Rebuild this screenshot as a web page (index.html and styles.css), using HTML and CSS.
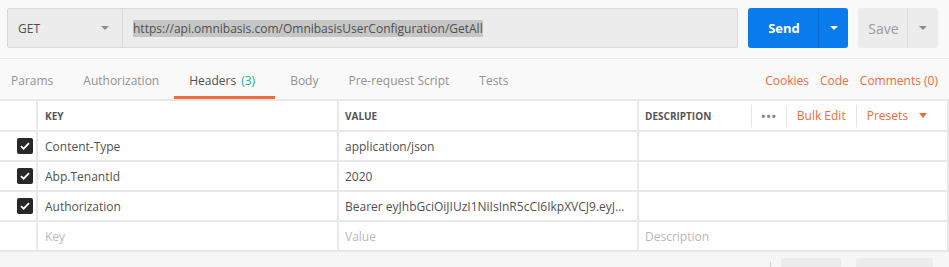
FILE: index.html
```html
<!DOCTYPE html>
<html>
<head>
<meta charset="utf-8">
<link rel="stylesheet" href="styles.css">
</head>
<body>
<div class="app">
  <div class="topbar">
    <div class="request">
      <div class="method">
        <span>GET</span>
        <svg class="caret" width="8" height="4" viewBox="0 0 8 4"><path d="M0 0h8L4 4z" fill="#8c8c8c"/></svg>
      </div>
      <div class="url"><span class="sel">https://api.omnibasis.com/OmnibasisUserConfiguration/GetAll</span></div>
    </div>
    <div class="btn send">
      <span class="label">Send</span>
      <span class="drop"><svg width="8" height="4" viewBox="0 0 8 4"><path d="M0 0h8L4 4z" fill="#fff"/></svg></span>
    </div>
    <div class="btn save">
      <span class="label">Save</span>
      <span class="drop"><svg width="8" height="4" viewBox="0 0 8 4"><path d="M0 0h8L4 4z" fill="#8c8c8c"/></svg></span>
    </div>
  </div>

  <div class="tabs">
    <div class="tab first">Params</div>
    <div class="tab">Authorization</div>
    <div class="tab active">Headers <span class="count">(3)</span></div>
    <div class="tab">Body</div>
    <div class="tab">Pre-request Script</div>
    <div class="tab">Tests</div>
    <div class="links">
      <span>Cookies</span>
      <span>Code</span>
      <span>Comments (0)</span>
    </div>
  </div>

  <div class="table">
    <div class="cell head"></div>
    <div class="cell head th key">KEY</div>
    <div class="cell head th">VALUE</div>
    <div class="cell head th desc-head">
      <span>DESCRIPTION</span>
      <div class="actions">
        <span class="sep"></span>
        <span class="dots">•••</span>
        <span class="sep"></span>
        <span class="act">Bulk Edit</span>
        <span class="sep"></span>
        <span class="act">Presets</span>
        <svg class="pcaret" width="8" height="5" viewBox="0 0 8 5"><path d="M0 0h8L4 5z" fill="#f26b3a"/></svg>
      </div>
    </div>

    <div class="cell check"><span class="box"><svg width="10" height="8" viewBox="0 0 10 8"><path d="M1 4.2l2.6 2.5L9 1.2" fill="none" stroke="#fff" stroke-width="1.8"/></svg></span></div>
    <div class="cell key">Content-Type</div>
    <div class="cell">application/json</div>
    <div class="cell"></div>

    <div class="cell check"><span class="box"><svg width="10" height="8" viewBox="0 0 10 8"><path d="M1 4.2l2.6 2.5L9 1.2" fill="none" stroke="#fff" stroke-width="1.8"/></svg></span></div>
    <div class="cell key">Abp.TenantId</div>
    <div class="cell">2020</div>
    <div class="cell"></div>

    <div class="cell check"><span class="box"><svg width="10" height="8" viewBox="0 0 10 8"><path d="M1 4.2l2.6 2.5L9 1.2" fill="none" stroke="#fff" stroke-width="1.8"/></svg></span></div>
    <div class="cell key">Authorization</div>
    <div class="cell">Bearer eyJhbGciOiJIUzI1NiIsInR5cCI6IkpXVCJ9.eyJ...</div>
    <div class="cell"></div>

    <div class="cell check"></div>
    <div class="cell key ph">Key</div>
    <div class="cell ph">Value</div>
    <div class="cell ph">Description</div>
  </div>

  <div class="footer">
    <span class="fsep"></span>
    <span class="fbtn b1"></span>
    <span class="fbtn b2"></span>
  </div>
</div>
</body>
</html>
```

FILE: styles.css
```css
* { box-sizing: border-box; }
html, body { margin: 0; padding: 0; }
body {
  background: #f8f8f8;
  font-family: "Open Sans", "DejaVu Sans", sans-serif;
  font-size: 12px;
  color: #505050;
  width: 949px;
  height: 267px;
  overflow: hidden;
}
.app { display: flex; flex-direction: column; }

.topbar {
  height: 59px;
  display: flex;
  align-items: flex-start;
  padding: 8px 0 0 7px;
  border-bottom: 1px solid #e6e6e6;
  background: #f9f9f9;
}
.request {
  display: flex;
  width: 731px;
  height: 40px;
  background: #ececec;
  border: 1px solid #d9d9d9;
  border-radius: 2px;
}
.method {
  width: 115px;
  display: flex;
  align-items: center;
  justify-content: space-between;
  padding: 0 13px 0 10px;
  border-right: 1px solid #d9d9d9;
  font-size: 12px;
  color: #505050;
}
.url {
  flex: 1;
  display: flex;
  align-items: center;
  padding-left: 10px;
}
.url .sel {
  background: #c6c6c6;
  color: #505050;
  line-height: 17px;
}
.btn {
  display: flex;
  height: 40px;
  border-radius: 3px;
  align-items: stretch;
}
.send {
  margin-left: 10px;
  width: 100px;
  background: #097bed;
  color: #fff;
  font-weight: bold;
  font-size: 13px;
}
.send .label { width: 70px; display: flex; align-items: center; justify-content: center; padding-left: 2px; }
.send .drop { flex: 1; border-left: 1px solid #0a6dd4; display: flex; align-items: center; justify-content: center; }
.save {
  margin-left: 10px;
  width: 80px;
  background: #ececec;
  color: #9a9a9a;
  font-size: 14px;
}
.save .label { width: 49px; display: flex; align-items: center; justify-content: center; padding-left: 2px; }
.save .drop { flex: 1; border-left: 1px solid #dcdcdc; display: flex; align-items: center; justify-content: center; }

.tabs {
  height: 40px;
  display: flex;
  align-items: stretch;
  background: #f9f9f9;
}
.tab {
  display: flex;
  align-items: center;
  padding: 6px 15px 0;
  border-bottom: 3px solid transparent;
  color: #929292;
  font-size: 12px;
}
.tab.first { padding-left: 11px; }
.tab.active {
  color: #505050;
  border-bottom-color: #f26b3a;
  padding-right: 20px;
}
.tab .count { color: #26b47f; margin-left: 5px; }
.links {
  margin-left: auto;
  display: flex;
  align-items: center;
  gap: 11px;
  padding: 6px 11px 3px 0;
  color: #f26b3a;
}

.table {
  display: grid;
  grid-template-columns: 36px 299px 298px 308px;
  grid-template-rows: 29px repeat(4, 28px);
  gap: 2px;
  background: #e8e8e8;
  border-top: 2px solid #e8e8e8;
  border-right: 2px solid #e8e8e8;
  border-bottom: 2px solid #e8e8e8;
  width: 949px;
}
.cell {
  background: #fff;
  display: flex;
  align-items: center;
  padding-left: 6px;
  white-space: nowrap;
  overflow: hidden;
  color: #505050;
  font-size: 12px;
}
.cell.key { padding-left: 7px; }
.th {
  font-size: 10px;
  font-weight: bold;
  color: #555;
}
.desc-head { justify-content: space-between; padding-right: 20px; }
.actions { display: flex; align-items: center; height: 100%; }
.sep {
  width: 1px;
  height: 22px;
  background: #e6e6e6;
}
.dots { color: #8a8a8a; font-size: 11px; letter-spacing: 1px; padding: 0 9px 0 9px; }
.act { color: #f26b3a; font-size: 12px; font-weight: normal; padding: 0 10px; }
.pcaret { margin-left: 1px; }
.check { justify-content: flex-end; padding: 0 3px 0 0; }
.box {
  width: 16px;
  height: 16px;
  background: #282828;
  border-radius: 2px;
  display: flex;
  align-items: center;
  justify-content: center;
}
.ph { color: #b8b8b8; }

.footer {
  height: 18px;
  display: flex;
  align-items: flex-end;
  background: #f6f6f6;
}
.fsep { margin-left: 770px; width: 1px; height: 8px; background: #d0d0d0; }
.fbtn { height: 12px; background: #ececec; border-radius: 3px 3px 0 0; }
.b1 { margin-left: 10px; width: 60px; }
.b2 { margin-left: 15px; width: 77px; }
```
